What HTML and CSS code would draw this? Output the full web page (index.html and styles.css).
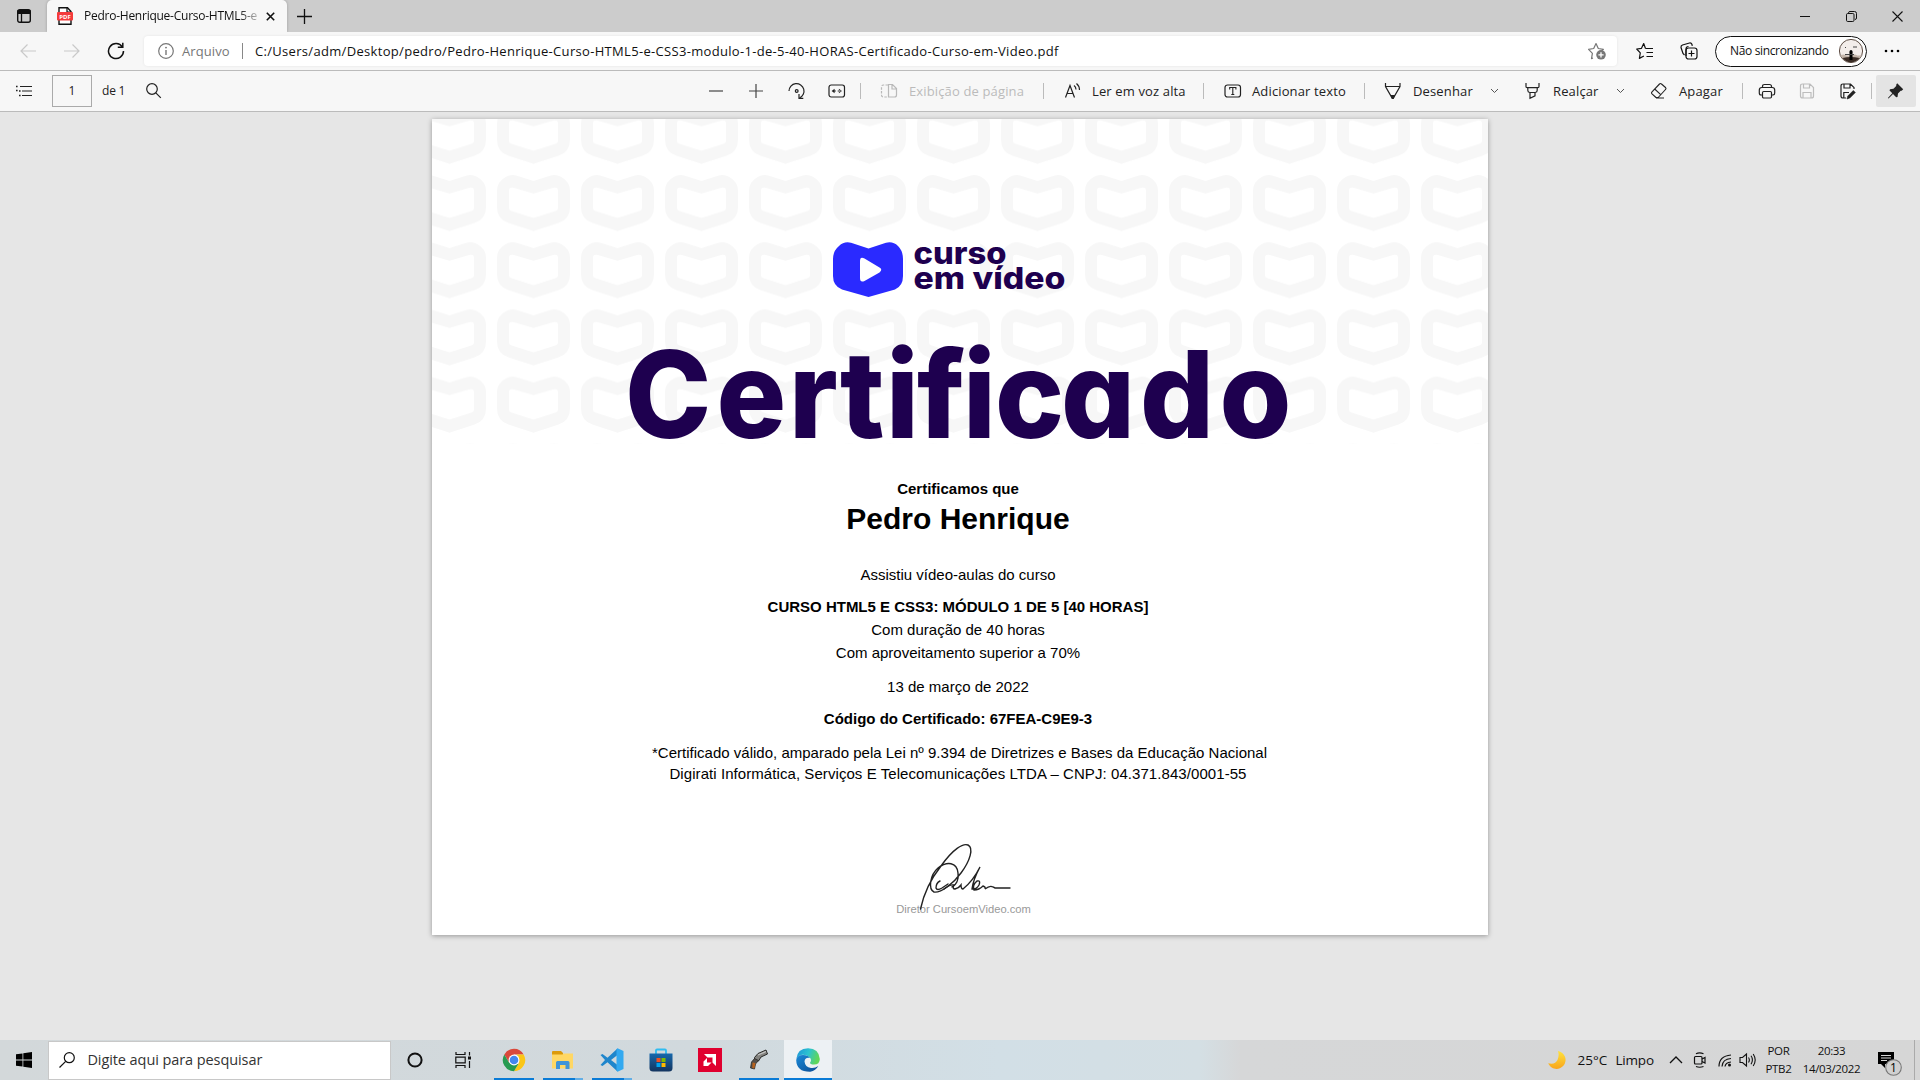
FILE: index.html
```html
<!DOCTYPE html>
<html lang="pt-BR">
<head>
<meta charset="utf-8">
<title>Certificado</title>
<link rel="stylesheet" href="styles.css">
</head>
<body>
<header class="tabs">
  <svg class="ico tabs-menu" width="16" height="16" viewBox="0 0 16 16"><rect x="1.7" y="1.7" width="12.6" height="12.6" rx="2" fill="none" stroke="#111" stroke-width="1.4"/><path d="M1.5 2h13v4h-13z" fill="#111"/><path d="M5.5 5v9" stroke="#111" stroke-width="1.3"/></svg>
  <div class="tab">
    <svg class="ico" width="16" height="18" viewBox="0 0 16 18"><path d="M2 .8h8.5l3.5 3.7v12.7H2z" fill="#fff" stroke="#111" stroke-width="1.4"/><path d="M10 1v4h4" fill="none" stroke="#111" stroke-width="1.2"/><rect x="0" y="5" width="16" height="8.5" rx="1" fill="#f43b3b"/><text class="pdf" x="8" y="11.6" text-anchor="middle">PDF</text></svg>
    <span class="t tab-title">Pedro-Henrique-Curso-HTML5-e</span>
    <svg class="ico tab-close" width="9" height="9" viewBox="0 0 9 9"><path d="M.8.8l7.4 7.4M8.2.8L.8 8.2" stroke="#111" stroke-width="1.6"/></svg>
  </div>
  <svg class="ico tab-new" width="15" height="15" viewBox="0 0 15 15"><path d="M7.5 0v15M0 7.5h15" stroke="#111" stroke-width="1.3"/></svg>
  <div class="win">
    <svg width="11" height="11" viewBox="0 0 11 11"><path d="M0 5.5h10" stroke="#111"/></svg>
    <svg width="11" height="11" viewBox="0 0 11 11" fill="none" stroke="#111"><rect x=".5" y="2.5" width="7.5" height="8" rx="1.2"/><path d="M2.5 2.3V1.8Q2.6.5 4 .5h4.5q2 0 2 2V7q0 1.400-1.500 1.500"/></svg>
    <svg width="11" height="11" viewBox="0 0 11 11"><path d="M.5.5l10 10M10.500.5l-10 10" stroke="#111" stroke-width="1.1"/></svg>
  </div>
</header>

<nav class="nav">
  <svg class="ico back" width="16" height="14" viewBox="0 0 16 14" fill="none" stroke="#c9c9c9" stroke-width="1.2"><path d="M16 7H1M7.500.5L1 7l6.500 6.500"/></svg>
  <svg class="ico fwd" width="16" height="14" viewBox="0 0 16 14" fill="none" stroke="#c9c9c9" stroke-width="1.2"><path d="M0 7h15M8.500.5L15 7l-6.500 6.500"/></svg>
  <svg class="ico reload" width="18" height="18" viewBox="0 0 18 18" fill="none" stroke="#111" stroke-width="1.5"><path d="M15.300 5A7.500 7.500 0 1 0 16.500 9"/><path d="M10.800 5.300h5V.8"/></svg>
  <div class="address">
    <svg class="ico" width="16" height="16" viewBox="0 0 16 16"><circle cx="8" cy="8" r="7.300" fill="none" stroke="#777" stroke-width="1.2"/><path d="M8 7v5" stroke="#777" stroke-width="1.4"/><circle cx="8" cy="4.600" r=".95" fill="#777"/></svg>
    <span class="t scheme">Arquivo</span>
    <i class="addr-sep"></i>
    <span class="t url">C:/Users/adm/Desktop/pedro/Pedro-Henrique-Curso-HTML5-e-CSS3-modulo-1-de-5-40-HORAS-Certificado-Curso-em-Video.pdf</span>
    <svg class="ico addr-star" width="19" height="18" viewBox="0 0 19 18"><path d="M5 16l-1.500.6.900-5.300L.6 7.300l5.100-.8L8 1.500l2.300 5 5.100.8-1.800 1.600" fill="none" stroke="#777" stroke-width="1.200" stroke-linejoin="round"/><circle cx="13" cy="12.800" r="4.800" fill="#777"/><path d="M13 10.200v5.200M10.400 12.800h5.200" stroke="#fff" stroke-width="1.300"/></svg>
  </div>
  <svg class="ico fav" width="18" height="18" viewBox="0 0 18 18" fill="none" stroke="#111" stroke-width="1.200" stroke-linejoin="round"><path d="M9.500 6.500L7.700 1.500 5.500 6.300l-4.800.7 3.600 3.800-.9 5.600 4.500-2.400M9.500 6.500H17M10.500 10.500H17M10.500 14.500H17"/></svg>
  <svg class="ico coll" width="18" height="18" viewBox="0 0 18 18" fill="none" stroke="#111" stroke-width="1.200"><path d="M4.500 13L3 11.500 1 5.500Q.8 3.500 2.500 3L9.500 1q1.800-.3 2.400 1.300l.4 1.500M6 14V7q0-2.500 2.500-2.500"/><rect x="6" y="6" width="11" height="11" rx="2.500"/><path d="M11.500 8.500v6M8.500 11.500h6"/></svg>
  <div class="profile"><span class="t prof-name">Não sincronizando</span>
    <svg width="24" height="24" viewBox="0 0 24 24"><circle cx="12" cy="12" r="11.600" fill="#f3edea" stroke="#4d3b31" stroke-width=".9"/><path d="M1.500 16q3-1 5 0t6 0 5 0 5 0a11.500 11.500 0 0 1-21 0z" fill="#c4b6ab"/><path d="M3.500 19q8-2 17 0A11 11 0 0 1 12 23.300 11 11 0 0 1 3.500 19z" fill="#3a2c25"/><path d="M12 13v8" stroke="#000" stroke-width="3"/><circle cx="12" cy="12.500" r="1.500"/><path d="M6 15.500h9M6 8.500h1M14 8h4" stroke="#444" stroke-width="1"/></svg>
  </div>
  <svg class="ico dots" width="16" height="4" viewBox="0 0 16 4"><circle cx="2" cy="2" r="1.300"/><circle cx="8" cy="2" r="1.300"/><circle cx="14" cy="2" r="1.300"/></svg>
</nav>

<div class="toolbar">
  <svg class="toc" width="16" height="12" viewBox="0 0 16 12"><path d="M4 1.500h12M6 6h10M6 10.500h10" stroke="#222" stroke-width="1.200"/><path d="M0 .8h1.600v1.500H0zM0 4.800h1.600v1.500H0zM3 5.200h1.600v1.500H3zM3 9.800h1.600v1.500H3z" fill="#222"/></svg>
  <div class="pagebox"><span class="t">1</span></div>
  <span class="t w-de">de 1</span>
  <svg class="find" width="16" height="16" viewBox="0 0 16 16" fill="none" stroke="#222" stroke-width="1.200"><circle cx="6" cy="6" r="5.300"/><path d="M9.800 9.800l5 5"/></svg>
  <svg class="minus" width="16" height="16" viewBox="0 0 16 16"><path d="M1 8h14" stroke="#444" stroke-width="1.200"/></svg>
  <svg class="plus" width="16" height="16" viewBox="0 0 16 16"><path d="M1 8h14M8 1v14" stroke="#444" stroke-width="1.200"/></svg>
  <svg class="rot" width="18" height="18" viewBox="0 0 18 18" fill="none" stroke="#222" stroke-width="1.200"><path d="M1 9A7.500 7.500 0 1 1 11.500 16"/><path d="M11 12v4.300h4.300"/><circle cx="8.700" cy="9" r="1.400"/></svg>
  <svg class="fit" width="18" height="18" viewBox="0 0 18 18"><rect x="1" y="3" width="15.500" height="12" rx="2.200" fill="none" stroke="#222" stroke-width="1.200"/><path d="M3.600 9l3-2.300v4.600zM13.900 9l-3-2.300v4.600zM5 8.500h2.800v1H5zM9.700 8.500h2.800v1H9.700z" fill="#222"/></svg>
  <i class="sep s1"></i>
  <svg class="pv" width="18" height="18" viewBox="0 0 18 18" fill="none" stroke="#b9b9b9" stroke-width="1.200"><path d="M8 3H3.500Q1.500 3 1.500 5v8q0 2 2 2H8" stroke-dasharray="2.500 1.300"/><path d="M8.500 2.500h4l4 4V13q0 2-2 2h-6zM12 2.500V7h4.500"/></svg>
  <span class="t off w-pv">Exibição de página</span>
  <i class="sep s2"></i>
  <svg class="read" width="18" height="18" viewBox="0 0 18 18" fill="none" stroke="#222" stroke-width="1.200"><path d="M1.500 15.500L6 3.500l4.500 12M3 11.500h6M10 3.500q2 1.500 2 4M12.500 1.500q3 2.500 3 6.500"/></svg>
  <span class="t w-read">Ler em voz alta</span>
  <i class="sep s3"></i>
  <svg class="addt" width="18" height="18" viewBox="0 0 18 18"><rect x="1" y="3" width="15.500" height="12" rx="2.500" fill="none" stroke="#222" stroke-width="1.200"/><path d="M5.700 7.500v-2h6.200v2M8.800 5.500v7M7.300 12.500h3" stroke="#222" stroke-width="1.100" fill="none"/></svg>
  <span class="t w-addt">Adicionar texto</span>
  <i class="sep s3"></i>
  <svg class="pen" width="18" height="18" viewBox="0 0 18 18" fill="none" stroke="#222" stroke-width="1.200"><path d="M1.500 1v3.500L8 15.800h1.500L16 4.500V1M1.500 4.500H16M6.700 13.500h4"/><path d="M7.600 14h2.300l-.6 2.300h-1z" fill="#222"/></svg>
  <span class="t w-pen">Desenhar</span>
  <svg class="chev" width="9" height="6" viewBox="0 0 9 6"><path d="M1 1l3.500 3.500L8 1" fill="none" stroke="#555"/></svg>
  <svg class="hl" width="18" height="18" viewBox="0 0 18 18" fill="none" stroke="#222" stroke-width="1.200"><path d="M2 1v3.500q0 1.200 1.200 1.200h10.600q1.200 0 1.200-1.200V1M3.800 5.700v2.500q0 2 2 2.300h5.400q2-.3 2-2.300V5.700M6 10.600v5.700l5-2.500v-3.200"/></svg>
  <span class="t w-hl">Realçar</span>
  <svg class="chev" width="9" height="6" viewBox="0 0 9 6"><path d="M1 1l3.500 3.500L8 1" fill="none" stroke="#555"/></svg>
  <svg class="era" width="18" height="18" viewBox="0 0 18 18" fill="none" stroke="#222" stroke-width="1.100" stroke-linejoin="round"><path d="M2 9.800L9.500 2q1-1 2 0l4 3.500q1 1 0 2L8.200 15.500H6l-4-3.700q-1-1 0-2zM4.700 7l6 5.600M6 16h8"/></svg>
  <span class="t w-era">Apagar</span>
  <i class="sep s4"></i>
  <svg class="print" width="18" height="18" viewBox="0 0 18 18" fill="none" stroke="#222" stroke-width="1.200"><path d="M4.500 5.500V4.500q0-2 2-2h5q2 0 2 2v1M4.500 13H3q-1.700 0-1.700-2V8q0-2.500 2.500-2.500h10.400q2.500 0 2.500 2.500v3q0 2-1.700 2h-1.500"/><rect x="4.500" y="9.500" width="9" height="6.500" rx="1.200"/></svg>
  <svg class="save" width="18" height="18" viewBox="0 0 18 18" fill="none" stroke="#bdbdbd" stroke-width="1.200"><path d="M2.500 4q0-2 2-2H12l3.500 3.500V14q0 2-2 2h-9q-2 0-2-2zM5.500 2v4h6V2M5 16v-5.500h8V16"/></svg>
  <svg class="saveas" width="18" height="18" viewBox="0 0 18 18" fill="none" stroke="#222" stroke-width="1.200"><path d="M7 16H4q-2 0-2-2V4q0-2 2-2h7.500L15 5.500V7M5 2v4h6V2M4.800 16v-5.500H10"/><path d="M8 17l.8-3 5.500-5.500 2 2-5.500 5.500z" fill="#222" stroke-width=".6"/></svg>
  <i class="sep s5"></i>
  <div class="pin"><svg width="18" height="18" viewBox="0 0 18 18"><path d="M10.200 1.200l6 6-1.500 1.500-1 .1-2.700 2.700-.5 3.500-1.300.3L6 12l-4.500 4.500-.6-.6L5.300 11.300 2.500 8.400l.5-1.200 3.500-.5 2.700-2.700.1-1.500z" fill="#222"/></svg></div>
</div>

<main class="viewer">
  <article class="cert">
    <svg class="cert-art" width="1056" height="330" viewBox="0 0 1056 330">
      <defs>
        <pattern id="books" x="-19" y="-11.200" width="84" height="67.200" patternUnits="userSpaceOnUse">
          <path fill="#f7f7f7" fill-rule="evenodd" d="M36.500 6L20 .7Q14-1 9 1.800 0 6.500 0 16V32Q0 44 11.500 48L36.500 56 61.500 48Q73 44 73 32V16Q73 6.500 64 1.800 59-1 53 .7ZM36.500 18.500L57 12.700Q61 12 61 15.500V33Q61 35 59 35.900L36.500 43 14 35.900Q12 35 12 33V15.500Q12 12 16 12.700Z"/>
        </pattern>
      </defs>
      <path d="M0 0h1056v325H0z" fill="url(#books)"/>
      <path d="M401 123h72v57h-72zM482 123h66v57h-66z" fill="#fff"/>
      <path d="M436.500 129.500L419 123.700Q412 122 407 127 401 132 401 140V157Q401 167 410 170.500L436.500 178 463 170.500Q471 167 471 157V140Q471 132 466 127 461 122 454 123.700Z" fill="#2a2aff"/>
      <path d="M428 142q0-5 4.500-2.500L447.500 148.500q3.500 2 0 5L432.500 162q-4.500 2-4.500-3z" fill="#fff"/>
      <text class="logo" x="481.500" y="144.500" textLength="93" lengthAdjust="spacingAndGlyphs">curso</text>
      <text class="logo" x="481.500" y="169.500" textLength="152" lengthAdjust="spacingAndGlyphs">em vídeo</text>
      <text class="heading" transform="scale(.96 1)" x="201 296.400 371.900 425 472.900 505.200 553.100 586.500 655.200 737.500 820.300" y="319.500">Certificado</text>
    </svg>
    <div class="body">
      <p class="b l1"><span class="t">Certificamos que</span></p>
      <p class="b name"><span class="t">Pedro Henrique</span></p>
      <p class="l3"><span class="t">Assistiu vídeo-aulas do curso</span></p>
      <p class="b l4"><span class="t">CURSO HTML5 E CSS3: MÓDULO 1 DE 5 [40 HORAS]</span></p>
      <p class="l5"><span class="t">Com duração de 40 horas</span></p>
      <p class="l5"><span class="t">Com aproveitamento superior a 70%</span></p>
      <p class="l6"><span class="t">13 de março de 2022</span></p>
      <p class="b l7"><span class="t">Código do Certificado: 67FEA-C9E9-3</span></p>
      <p class="l8"><span class="t">*Certificado válido, amparado pela Lei nº 9.394 de Diretrizes e Bases da Educação Nacional</span></p>
      <p class="l9"><span class="t">Digirati Informática, Serviços E Telecomunicações LTDA – CNPJ: 04.371.843/0001-55</span></p>
      <p class="dir"><span class="t">Diretor CursoemVideo.com</span></p>
    </div>
    <svg class="sign" width="96" height="72" viewBox="0 0 96 72" fill="none" stroke="#222" stroke-width="1.400" stroke-linecap="round"><path d="M1.500 67C4 55 11 38 22 24 34 7 44 1 49 3 55 6 51 19 42 31 34 42 22 51 15 50 9 47 11 33 19 26 28 19 38 20 39 31 40 38 37 43 33 45"/><path d="M21 39q-4 2-4 7 1 3 6 0l6-4M25 47q6-5 10-4-2 4 1 4 4-1 6-4 0 4 2 4 10-8 17-22Q54 38 53 47q4 1 7-4 2-5-2-4-5 4-3 9 5 0 9-4 3 1 2 3 5-4 8-2l2 1h15"/></svg>
  </article>
</main>

<footer class="taskbar">
  <svg class="start" width="16" height="16" viewBox="0 0 16 16"><path d="M0 2.300L6.500 1.400v6.200H0zM7.300 1.300L16 0v7.600H7.300zM0 8.400h6.500v6.200L0 13.700zM7.300 8.400H16V16l-8.700-1.300z"/></svg>
  <div class="search">
    <svg width="16" height="16" viewBox="0 0 16 16" fill="none" stroke="#111" stroke-width="1.200"><circle cx="10.300" cy="5.700" r="5"/><path d="M6.700 9.300L.5 15.500"/></svg>
    <span class="t">Digite aqui para pesquisar</span>
  </div>
  <svg class="cortana" width="16" height="16" viewBox="0 0 16 16"><circle cx="8" cy="8" r="6.600" fill="none" stroke="#111" stroke-width="2"/></svg>
  <svg class="taskview" width="17" height="16" viewBox="0 0 17 16" fill="none" stroke="#111" stroke-width="1.200"><path d="M1 0v2.500h9V0M1 16v-2.500h9V16M.8 5.200h9.400v5.600H.8zM14.500 0v3.500M14.500 9v7"/><path d="M13 4.500h3v3h-3z" fill="#111" stroke="none"/></svg>
  <div class="apps">
    <div class="app run"><svg width="24" height="24" viewBox="0 0 24 24"><circle cx="12" cy="12" r="11.200" fill="#e0e0e0"/><path d="M12 12L2.300 6.400A11.200 11.200 0 0 1 21.700 6.400H12z" fill="#d9493b"/><path d="M21.700 6.400A11.200 11.200 0 0 1 12 23.200l4.900-8.400q1.500-4.500-2.400-8.400z" fill="#fbc617"/><path d="M2.300 6.400l4.900 8.400L12 12V6.400z" fill="#d9493b"/><path d="M2.300 6.400A11.200 11.200 0 0 0 12 23.200l4.300-7.300L7.300 15z" fill="#279a50"/><circle cx="12" cy="12" r="5.400" fill="#fff"/><circle cx="12" cy="12" r="4.300" fill="#4487ee"/></svg></div>
    <div class="app run multi"><svg width="24" height="24" viewBox="0 0 24 24"><path d="M1 4q0-1 1-1h8l2 2v3H1z" fill="#dc9a0b"/><path d="M1 6.500h10.500l1-1H22v15H1z" fill="#ffd764"/><path d="M5 21v-6.500q0-1.500 1.500-1.500h10.500q1.500 0 1.500 1.500V21h-4v-4H9v4z" fill="#3f94d8"/></svg></div>
    <div class="app run multi"><svg width="24" height="24" viewBox="0 0 24 24"><path d="M17.500.5L7.500 9.700 2.500 6 .5 7 5 12 .5 17l2 1 5-3.700 10 9.200zM17.500 7v10L11 12z" fill="#1f86cc" fill-rule="evenodd"/><path d="M17.500.2l6 2.800v18l-6 2.800-1-1V1.200z" fill="#33a9f0"/></svg></div>
    <div class="app"><svg width="24" height="24" viewBox="0 0 24 24"><defs><linearGradient id="bag" x2="0" y2="1"><stop stop-color="#1768ac"/><stop offset="1" stop-color="#14355f"/></linearGradient></defs><path d="M7 6V2.500q0-1 1-1h8q1 0 1 1V6" fill="none" stroke="#2fbcf1" stroke-width="1.800"/><path d="M.5 5.500h23V20q0 3.500-3.500 3.500H4Q.5 23.500.5 20z" fill="url(#bag)"/><path d="M7.500 10h4v4h-4z" fill="#f25022"/><path d="M12.500 10h4v4h-4z" fill="#7fba00"/><path d="M7.500 15h4v4h-4z" fill="#00a4ef"/><path d="M12.500 15h4v4h-4z" fill="#ffb900"/></svg></div>
    <div class="app"><svg width="24" height="24" viewBox="0 0 24 24"><path d="M0 0h24v24H0z" fill="#e0002f"/><path d="M6 6h12v12l-3.500-3.500V9.500h-5z" fill="#fff"/><path d="M9 10l-3.500 3.500V18H10l3.500-3.500H9z" fill="#fff"/></svg></div>
    <div class="app run"><svg width="24" height="24" viewBox="0 0 24 24"><path d="M7.500 9.500L11 5.500 19 2l1.500 4-6.500 3-2.500 4-4-1z" fill="#83837f" stroke="#2a2a28" stroke-width="1"/><path d="M7.500 10.500L4.500 14l-1 6 4 1 1-5 3-3.500z" fill="#55504a" stroke="#2a2a28" stroke-width=".8"/><path d="M5.500 14.500l3 .5-1.200 5.500-2-.4z" fill="#b8621d"/><path d="M11 7l8-3.500" stroke="#c4c4c4" stroke-width="1.300"/></svg></div>
    <div class="app run active"><svg width="24" height="24" viewBox="0 0 24 24"><defs><linearGradient id="ea" x2="1" y2=".3"><stop stop-color="#1b92d8"/><stop offset=".55" stop-color="#2cc3d0"/><stop offset="1" stop-color="#5fd65a"/></linearGradient><linearGradient id="eb" x2="1" y2="1"><stop stop-color="#1a8ad8"/><stop offset="1" stop-color="#0c4a92"/></linearGradient></defs><path d="M.3 11Q1.500.3 12 .3 23 .5 23.800 11q0 5.500-5.800 5.500-4 0-4-1.800 2-2.500 0-5Q10 6 5 7 1.500 8 .3 11z" fill="url(#ea)"/><path d="M.2 12Q1 7 7 7q5 0 7 3Q9 9 8.500 13.500q.5 5.500 6.500 6.500 4 .5 7.300-2-2.500 4.500-8 5.800Q.5 24 .2 12z" fill="url(#eb)"/></svg></div>
  </div>
  <svg class="moon" width="20" height="20" viewBox="0 0 20 20"><defs><linearGradient id="mo" x2="0" y2="1"><stop stop-color="#ffe23d"/><stop offset="1" stop-color="#f9a51c"/></linearGradient></defs><path d="M11 1a9 9 0 1 1-9.800 12.200Q8 15 10.500 10 12.500 5.500 11 1z" fill="url(#mo)"/></svg>
  <span class="t temp">25°C</span><span class="t sky">Limpo</span>
  <svg class="up" width="14" height="8" viewBox="0 0 14 8"><path d="M1 7l6-6 6 6" fill="none" stroke="#111" stroke-width="1.300"/></svg>
  <svg class="meet" width="14" height="16" viewBox="0 0 14 16" fill="none" stroke="#111" stroke-width="1.200"><rect x="1.500" y="4.500" width="7.500" height="7.500" rx="1"/><path d="M9 7l3-1.500v5.500L9 9.500M3 1.800q3.500-2 7.500 0M3 14.500q3.500 1.500 7.500 0"/></svg>
  <svg class="wifi" width="14" height="14" viewBox="0 0 14 14" fill="none" stroke="#111" stroke-width="1.200"><path d="M1 13.500Q1 3 13 2M4 13.500Q4.500 6 13 5.500M7 13.500Q7.500 9.500 13 9" /><circle cx="11.500" cy="12" r="1.500" fill="#111" stroke="none"/></svg>
  <svg class="vol" width="18" height="16" viewBox="0 0 18 16" fill="none" stroke="#111" stroke-width="1.100"><path d="M1 5.500h2.500L7.500 2v12L3.500 10.500H1zM9.500 5.500q1.700 2.500 0 5M12 3.800q2.800 4 0 8.400M14.200 2q4 6 0 12"/></svg>
  <div class="two lang"><span class="t por">POR</span><span class="t ptb">PTB2</span></div>
  <div class="two clock"><span class="t hour">20:33</span><span class="t date">14/03/2022</span></div>
  <svg class="notif" width="25" height="25" viewBox="0 0 25 25"><path d="M0 0h16v12H7v4l-4-4H0z"/><path d="M3 3.500h10M3 6h10M3 8.500h6" stroke="#d6d6d6" stroke-width="1.100"/><circle cx="15.500" cy="15.500" r="7.800" fill="#d0d0d0" stroke="#777" stroke-width="1.100"/><text class="count" x="15.500" y="19.500" text-anchor="middle">1</text></svg>
  <i class="desk"></i>
</footer>
</body>
</html>
```
FILE: styles.css
```css
* { box-sizing: border-box; }
body { margin: 0; width: 1920px; height: 1080px; overflow: hidden; display: flex; flex-direction: column; background: #e6e6e6; color: #111; font: 12px/16px "Open Sans", "Noto Sans", sans-serif; }
svg { display: block; flex: none; }
.t { white-space: nowrap; flex: none; }

.tabs { flex: none; height: 32px; background: #ccc; display: flex; align-items: center; }
.tabs-menu { margin-left: 16px; }
.tab { width: 240px; height: 32px; margin-left: 15px; padding-left: 10px; display: flex; align-items: center; background: #f7f7f7; border-radius: 5px 5px 0 0; box-shadow: 0 0 3px rgba(0,0,0,.25); }
.pdf { font: 700 6px "Open Sans", sans-serif; fill: #fff; }
.tab-title { width: 174px; margin-left: 11px; letter-spacing: -.25px; -webkit-mask-image: linear-gradient(90deg, #000 155px, transparent 180px); mask-image: linear-gradient(90deg, #000 155px, transparent 180px); }
.tab-close { margin-left: 8px; }
.tab-new { margin-left: 10px; }
.win { margin-left: auto; margin-right: 17px; display: flex; gap: 35px; }

.nav { flex: none; height: 39px; background: #f7f7f7; border-bottom: 1px solid #bbb; display: flex; align-items: center; position: relative; }
.back { margin-left: 20px; }
.fwd { margin-left: 28px; }
.reload { margin-left: 27px; }
.address { width: 1473px; height: 30px; margin-left: 19px; padding-left: 14px; display: flex; align-items: center; background: #fff; border-radius: 4px; box-shadow: 0 0 3px rgba(0,0,0,.08); font-size: 13px; }
.scheme { width: 49px; margin-left: 8px; color: #767676; letter-spacing: .1px; }
.addr-sep { width: 1px; height: 16px; margin-left: 11px; background: #888; }
.url { width: 1320px; margin-left: 12px; letter-spacing: .315px; }
.addr-star { margin-left: 13px; }
.fav { margin-left: 19px; }
.coll { margin-left: 26px; }
.profile { width: 152px; height: 31px; margin-left: 17px; padding: 0 3px 0 14px; display: flex; align-items: center; justify-content: space-between; border: 1.5px solid #111; border-radius: 16px; background: #fff; }
.prof-name { letter-spacing: -.35px; }
.dots { margin-left: 17px; }

.toolbar { flex: none; height: 41px; background: #f7f7f7; border-bottom: 1px solid #bbb; display: flex; align-items: center; color: #222; font-size: 13px; letter-spacing: .14px; }
.toc { margin-left: 16px; }
.pagebox { width: 40px; height: 32px; margin-left: 20px; border: 1px solid #aaa; display: flex; align-items: center; justify-content: center; font-size: 12px; }
.w-de { width: 24px; margin-left: 10px; font-size: 12px; letter-spacing: -.2px; }
.find { margin-left: 20px; }
.minus { margin-left: 546px; }
.plus, .rot { margin-left: 24px; }
.fit { margin-left: 22px; }
.sep { width: 1px; height: 16px; background: #bbb; flex: none; }
.s1 { margin-left: 14px; }
.pv { margin-left: 19px; }
.w-pv { width: 116px; margin-left: 11px; }
.off { color: #bbb; }
.s2 { margin-left: 18px; }
.read, .addt { margin-left: 20px; }
.w-read { width: 94px; margin-left: 10px; }
.s3, .s4 { margin-left: 17px; }
.w-addt { width: 95px; margin-left: 10px; }
.pen { margin-left: 19px; }
.w-pen { width: 60px; margin-left: 11px; }
.chev { margin-left: 17px; }
.hl, .era { margin-left: 25px; }
.w-hl, .w-era { width: 46px; margin-left: 11px; }
.print { margin-left: 15px; }
.save { margin-left: 22px; }
.saveas { margin-left: 23px; }
.s5 { margin-left: 14px; }
.pin { width: 40px; height: 32px; margin-left: 4px; display: flex; align-items: center; justify-content: center; background: #e4e4e4; border-radius: 2px; }

.viewer { flex: 1; padding-top: 7px; display: flex; justify-content: center; align-items: flex-start; }
.cert { position: relative; width: 1056px; height: 816px; background: #fff; box-shadow: 0 1px 5px rgba(0,0,0,.35); color: #000; font: 15px/20px "Liberation Sans", Arial, sans-serif; }
.logo { font: 800 30px Inter, sans-serif; font-feature-settings: "cv11"; fill: #1e004f; }
.heading { font: 800 121px Inter, sans-serif; font-feature-settings: "cv11"; fill: #1e004f; }
.body { margin-top: 30px; padding-right: 4px; text-align: center; }
.body p { margin: 0; }
.b { font-weight: 700; }
.name { font-size: 30px; line-height: 40px; }
.body .l3 { padding-top: 26px; }
.l4 { padding-top: 12px; }
.l5 { padding-top: 3px; }
.l6 { padding-top: 14px; }
.l7 { padding-top: 12px; }
.l8 { padding-top: 14px; padding-left: 3px; letter-spacing: .01px; }
.l9 { padding-top: 1px; letter-spacing: .07px; }
.dir { padding-top: 115px; padding-left: 11px; font-size: 11.200px; color: #999; }
.sign { position: absolute; left: 487px; top: 723px; }

.taskbar { flex: none; height: 40px; display: flex; align-items: center; font-size: 12px; color: #111; background: linear-gradient(90deg, #d3d8da 0, #d1d9dd 700px, #d2dfe6 1000px, #d4dfe4 1200px, #d6d7d8 1240px, #d6d6d6 1920px); }
.start { margin-left: 16px; }
.search { width: 343px; height: 39px; margin-left: 16.400px; padding-left: 10px; display: flex; align-items: center; gap: 12px; background: #fff; border: 1px solid #c8c8c8; font-size: 14.500px; letter-spacing: -.08px; color: #333; }
.cortana { margin-left: 16.100px; }
.taskview { margin-left: 32px; }
.apps { margin-left: 18px; height: 40px; display: flex; gap: 1px; }
.app { width: 48px; display: flex; align-items: center; justify-content: center; position: relative; }
.run::after { content: ""; position: absolute; left: 4px; right: 4px; bottom: 0; height: 2px; background: #0a7bd6; }
.multi::after { background: linear-gradient(90deg, #0a7bd6 32px, #62aee6 32px); }
.active { background: #edf1f4; }
.active::after { left: 0; right: 0; }
.moon { margin-left: 715px; }
.temp { margin-left: 10px; width: 30px; font-size: 13.500px; }
.sky { margin-left: 8px; width: 39px; font-size: 13.500px; letter-spacing: -.2px; }
.up { margin-left: 15px; }
.meet { margin-left: 10px; }
.wifi { margin-left: 11px; }
.vol { margin-left: 7px; }
.two { display: flex; flex-direction: column; align-items: center; line-height: 18px; font-size: 11.500px; letter-spacing: -.35px; }
.lang { width: 28px; margin-left: 7px; }
.clock { width: 60px; margin-left: 9px; }
.notif { margin-left: 17px; margin-top: 8px; }
.count { font: 12px "Open Sans", sans-serif; }
.desk { width: 1px; height: 40px; margin-left: 11px; background: #aaa; }
```
